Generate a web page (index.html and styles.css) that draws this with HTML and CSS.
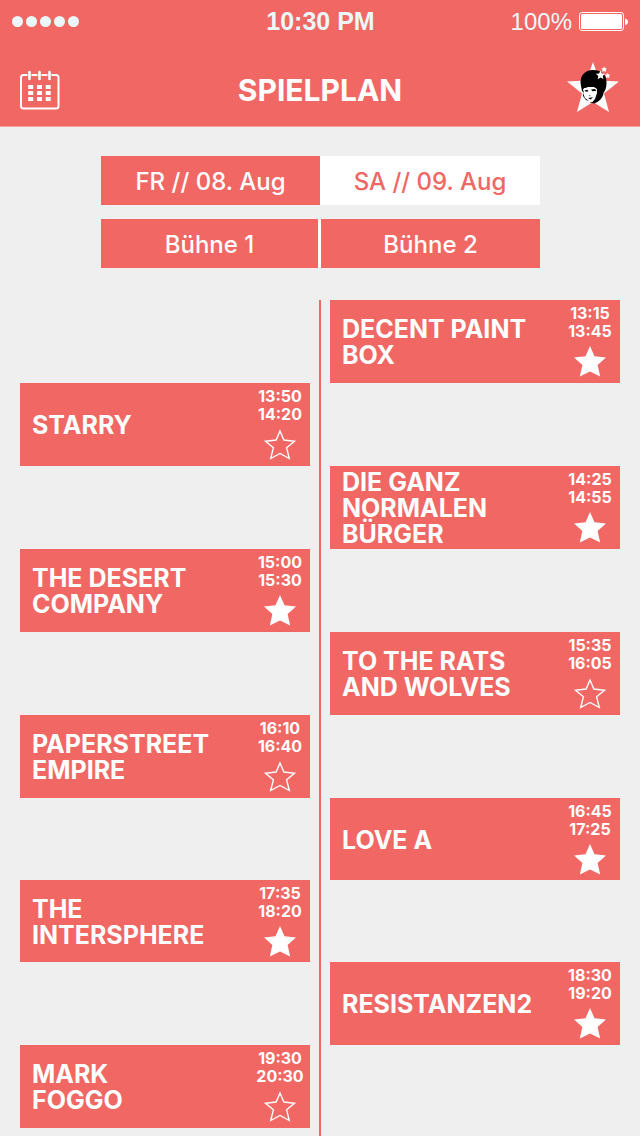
FILE: index.html
```html
<!DOCTYPE html>
<html lang="de">
<head>
<meta charset="utf-8">
<meta name="viewport" content="width=device-width, initial-scale=1">
<title>Spielplan</title>
<link rel="stylesheet" href="styles.css">
</head>
<body>
<svg class="symbols" aria-hidden="true">
  <symbol id="star" viewBox="0 0 34 34">
    <path d="M17 2 L21.500 12.200 L33 13.500 L24.600 21 L27.200 32.600 L17 27.500 L6.800 32.600 L9.400 21 L1 13.500 L12.500 12.200 Z" fill="#fff"/>
  </symbol>
  <symbol id="star-outline" viewBox="0 0 34 34">
    <path d="M17 4 L20.900 13 L31.500 14.200 L23.600 20.800 L26.300 31.500 L17 26.500 L7.700 31.500 L10.400 20.800 L2.500 14.200 L13.100 13 Z" fill="none" stroke="#fff" stroke-width="1.400"/>
  </symbol>
</svg>
<header class="top">
  <div class="status">
    <div class="signal"><i></i><i></i><i></i><i></i><i></i></div>
    <div class="clock">10:30 PM</div>
    <div class="power">
      <span>100%</span>
      <svg class="battery" viewBox="0 0 50 20" aria-hidden="true">
        <rect x="0.500" y="0.500" width="44" height="18" rx="2.500" fill="none" stroke="#fff"/>
        <rect x="2" y="2" width="41" height="15" rx="1.500" fill="#fff"/>
        <path d="M46 6.500 Q49 7 49 9.700 Q49 12.500 46 13 Z" fill="#fff"/>
      </svg>
    </div>
  </div>
  <nav class="bar">
    <button class="icon-button" aria-label="Kalender">
      <svg class="calendar" viewBox="0 0 40 40" aria-hidden="true">
        <rect x="1" y="5" width="37.500" height="33.500" rx="2.500" fill="none" stroke="#fff" stroke-width="2"/>
        <path d="M9.500 2v7M19.500 2v7M29.500 2v7" stroke="#f06764" stroke-width="4"/>
        <path d="M9.500 2v7M19.500 2v7M29.500 2v7" stroke="#fff" stroke-width="2.600" stroke-linecap="round"/>
        <path d="M8.200 17h5M17 17h5M25.700 17h5M8.200 23h5M17 23h5M25.700 23h5M8.200 29h5M17 29h5M25.700 29h5" stroke="#fff" stroke-width="4"/>
      </svg>
    </button>
    <h1 class="title">SPIELPLAN</h1>
    <button class="icon-button" aria-label="Startseite">
      <svg class="logo" viewBox="0 0 54 56" aria-hidden="true">
        <path d="M27 0 L33.500 18.500 L53 19.500 L38 31.500 L43 50 L27 40 L11 50 L16 31.500 L1 19.500 L20.500 18.500 Z" fill="#fff"/>
        <path d="M15 24 C13 15 18 8.500 26 8 C35 7.500 41 13 40.500 21 C40.500 26 39 29 37.500 31 C37 36 33 40 28 41.500 L24 40.500 C26 39 29 37 29 34 L31 28 L28 26 L18 26 L18 31 L16 29 Z" fill="#000"/>
        <path d="M17 27 L22 25 L28 25 L31 27 L31 31 L29 37 L26 40.500 L22 38 L18.500 34 Z" fill="#fff"/>
        <path d="M18.500 28.500l3-.8 1 1.500-2.500.5zM25 27.500l4-.5 1.500 1.800-4 .4zM23 33l1.500.4-.5 1zM22 36l5-.7-2.500 2.200zM17 31l2 5 4 3-3-1-3-4z" fill="#000"/>
        <path d="M34.500 8.500l1.400 2.900 3.200.3-2.400 2.200.8 3.100-3-1.600-2.800 1.800.6-3.300-2.400-2.200 3.200-.3z" fill="#fff"/>
        <path d="M38 4.500l1.100 1.700 1.900.2-1.300 1.600.4 1.900-2-.9-1.800 1.100.3-2.100-1.400-1.400 2-.3zM41.500 11l1 1.500 1.800.2-1.300 1.500.4 1.900-1.800-.8-1.700.9.300-1.900-1.400-1.500 1.900-.2z" fill="#fff"/>
      </svg>
    </button>
  </nav>
</header>
<main>
  <div class="filters">
    <div class="days">
      <button class="tab">FR // 08. Aug</button>
      <button class="tab tab-active">SA // 09. Aug</button>
    </div>
    <div class="stages">
      <button class="tab">Bühne 1</button>
      <button class="tab">Bühne 2</button>
    </div>
  </div>
  <section class="schedule">
    <article class="act right slot-1"><h2>DECENT PAINT BOX</h2><div class="info"><time>13:15</time><time>13:45</time><button class="fav" aria-label="Favorit" aria-pressed="true"><svg aria-hidden="true"><use href="#star"/></svg></button></div></article>
    <article class="act left slot-2"><h2>STARRY</h2><div class="info"><time>13:50</time><time>14:20</time><button class="fav" aria-label="Favorit" aria-pressed="false"><svg aria-hidden="true"><use href="#star-outline"/></svg></button></div></article>
    <article class="act right slot-3"><h2>DIE GANZ NORMALEN BÜRGER</h2><div class="info"><time>14:25</time><time>14:55</time><button class="fav" aria-label="Favorit" aria-pressed="true"><svg aria-hidden="true"><use href="#star"/></svg></button></div></article>
    <article class="act left slot-4"><h2>THE DESERT COMPANY</h2><div class="info"><time>15:00</time><time>15:30</time><button class="fav" aria-label="Favorit" aria-pressed="true"><svg aria-hidden="true"><use href="#star"/></svg></button></div></article>
    <article class="act right slot-5"><h2>TO THE RATS AND WOLVES</h2><div class="info"><time>15:35</time><time>16:05</time><button class="fav" aria-label="Favorit" aria-pressed="false"><svg aria-hidden="true"><use href="#star-outline"/></svg></button></div></article>
    <article class="act left slot-6"><h2>PAPERSTREET EMPIRE</h2><div class="info"><time>16:10</time><time>16:40</time><button class="fav" aria-label="Favorit" aria-pressed="false"><svg aria-hidden="true"><use href="#star-outline"/></svg></button></div></article>
    <article class="act right slot-7"><h2>LOVE A</h2><div class="info"><time>16:45</time><time>17:25</time><button class="fav" aria-label="Favorit" aria-pressed="true"><svg aria-hidden="true"><use href="#star"/></svg></button></div></article>
    <article class="act left slot-8"><h2>THE INTERSPHERE</h2><div class="info"><time>17:35</time><time>18:20</time><button class="fav" aria-label="Favorit" aria-pressed="true"><svg aria-hidden="true"><use href="#star"/></svg></button></div></article>
    <article class="act right slot-9"><h2>RESISTANZEN2</h2><div class="info"><time>18:30</time><time>19:20</time><button class="fav" aria-label="Favorit" aria-pressed="true"><svg aria-hidden="true"><use href="#star"/></svg></button></div></article>
    <article class="act left slot-10"><h2>MARK<br>FOGGO</h2><div class="info"><time>19:30</time><time>20:30</time><button class="fav" aria-label="Favorit" aria-pressed="false"><svg aria-hidden="true"><use href="#star-outline"/></svg></button></div></article>
    <div class="axis"></div>
  </section>
</main>
</body>
</html>
```
FILE: styles.css
```css
* { box-sizing: border-box; }
body {
  margin: 0;
  background: #efefef;
  color: #fff;
  font-family: Inter, "Liberation Sans", sans-serif;
}
h1, h2 { margin: 0; font-weight: 700; }
button {
  margin: 0;
  padding: 0;
  border: 0;
  background: none;
  color: inherit;
  font: inherit;
  cursor: pointer;
}
svg { display: block; }
.symbols { position: absolute; width: 0; height: 0; }

.top {
  background: #f06764;
  border-bottom: 1px solid #f4a3a2;
}
.status {
  display: grid;
  grid-template-columns: 1fr auto 1fr;
  align-items: center;
  height: 43px;
  padding: 0 11px 0 12px;
  color: #ebf7f8;
  font-family: "Liberation Sans", sans-serif;
}
.signal { display: flex; gap: 3px; }
.signal i {
  width: 11px;
  height: 11px;
  border-radius: 50%;
  background: #ebf7f8;
}
.clock { font-size: 25px; font-weight: 700; }
.power {
  display: flex;
  align-items: center;
  justify-content: flex-end;
  gap: 7px;
  font-size: 24px;
}
.battery { width: 50px; height: 20px; }

.bar {
  display: flex;
  align-items: center;
  justify-content: space-between;
  height: 83px;
  padding: 11px 20px 0;
}
.icon-button { width: 54px; }
.calendar { width: 40px; height: 40px; }
.logo { width: 54px; height: 56px; }
.title { font-size: 30px; line-height: 36px; }

.filters {
  display: grid;
  gap: 14px;
  padding: 29px 100px 32px 101px;
}
.days, .stages { display: grid; }
.days { grid-template-columns: 219fr 220fr; }
.stages {
  grid-template-columns: 217fr 219fr;
  gap: 3px;
  background: #fff;
}
.tab {
  height: 49px;
  padding-top: 2px;
  background: #f06764;
  font-size: 24px;
  font-weight: 500;
}
.tab-active { background: #fff; color: #f06764; }

.schedule {
  display: grid;
  grid-template-columns: 1fr 2px 1fr;
  grid-template-rows: repeat(6, 83px) 82px 82px 83px 83px;
  column-gap: 9px;
  padding: 0 20px 8px;
}
.axis {
  grid-area: 1 / 2 / 11 / 3;
  margin-bottom: -8px;
  background: #f06764;
}
.act {
  display: flex;
  align-items: center;
  justify-content: space-between;
  padding: 1px 0 0 12px;
  background: #f06764;
}
.act h2 { font-size: 25px; line-height: 26px; }
.left { grid-column: 1; }
.right { grid-column: 3; }
.slot-1 { grid-row: 1; }
.slot-2 { grid-row: 2; }
.slot-3 { grid-row: 3; }
.slot-4 { grid-row: 4; }
.slot-5 { grid-row: 5; }
.slot-6 { grid-row: 6; }
.slot-7 { grid-row: 7; }
.slot-8 { grid-row: 8; }
.slot-9 { grid-row: 9; }
.slot-10 { grid-row: 10; }
.info {
  display: flex;
  flex: none;
  flex-direction: column;
  align-items: center;
  align-self: flex-start;
  width: 60px;
  padding-top: 3px;
  font-size: 16px;
  font-weight: 700;
  line-height: 18px;
}
.fav { margin-top: 4px; }
.fav svg { width: 34px; height: 34px; }
```
